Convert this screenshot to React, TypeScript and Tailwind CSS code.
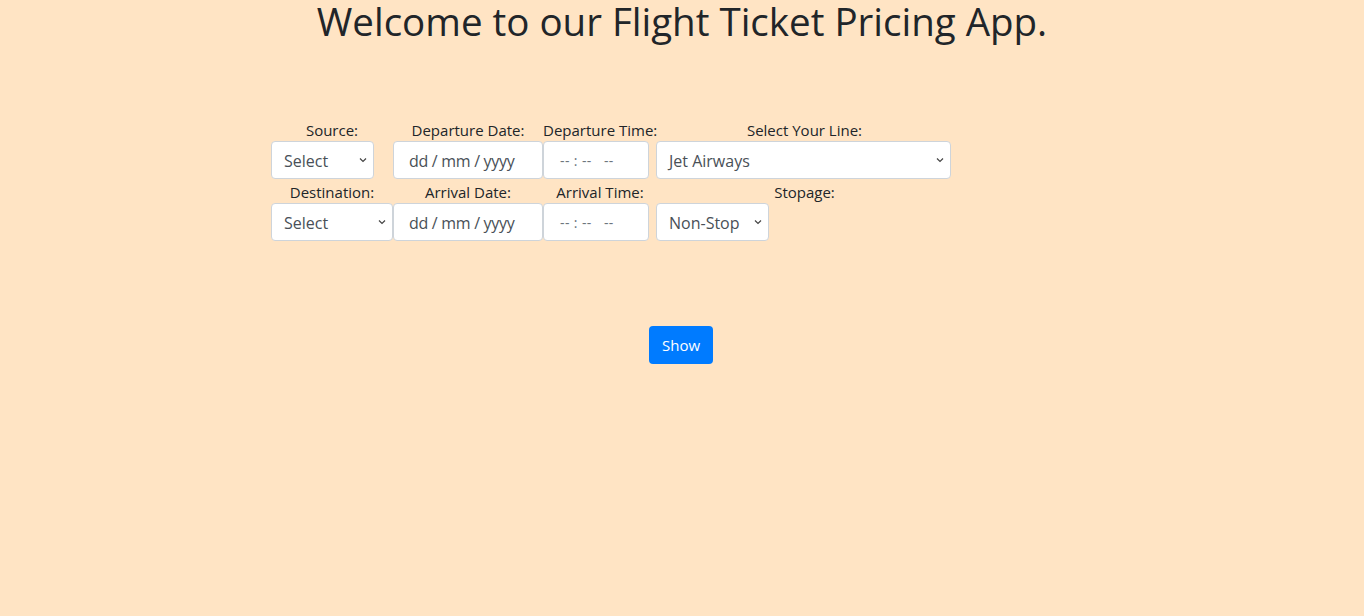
import React from 'react';

const font = { fontFamily: '"Open Sans", "Noto Sans", sans-serif' };

const Chevron = () => (
  <svg width="10" height="10" viewBox="0 0 10 10" className="shrink-0">
    <path d="M2 3.5 L5 6.5 L8 3.5" fill="none" stroke="#444" strokeWidth="1.2" />
  </svg>
);

const SelectBox = ({ text, w }: { text: string; w: string }) => (
  <div className={`${w} h-[38px] bg-white border border-[#ced4da] rounded-[4px] flex items-center justify-between pl-[12px] pr-[5px] text-[16px] text-[#495057]`}>
    <span className="mt-[1px]">{text}</span>
    <Chevron />
  </div>
);

const DateBox = () => (
  <div className="w-[150px] h-[38px] bg-white border border-[#ced4da] rounded-[4px] flex items-center pl-[15px] pt-[1px] text-[16px] text-[#495057] tracking-[-0.3px]">
    dd / mm / yyyy
  </div>
);

const TimeBox = () => (
  <div className="w-[106px] h-[38px] bg-white border border-[#ced4da] rounded-[4px] flex items-center pl-[16px] pt-[1px] text-[14px] text-[#6c757d] whitespace-pre tracking-[0.4px]">
    {'-- : --   --'}
  </div>
);

const Label = ({ children }: { children: React.ReactNode }) => (
  <div className="h-[22px] leading-[22px] text-[15px] text-[#212529] text-center whitespace-nowrap">{children}</div>
);

export default function App() {
  return (
    <div className="min-h-[616px] w-full bg-[#ffe4c4]" style={font}>
      <h1 className="text-center text-[38.5px] leading-[42px] text-[#212529] font-normal m-0">
        Welcome to our Flight Ticket Pricing App.
      </h1>
      <div className="ml-[271px] mt-[77px] grid grid-cols-[122px_150px_114px_295px]">
        <Label>Source:</Label>
        <Label>Departure Date:</Label>
        <Label>Departure Time:</Label>
        <Label>Select Your Line:</Label>
        <div><SelectBox text="Select" w="w-[103px]" /></div>
        <div><DateBox /></div>
        <div><TimeBox /></div>
        <div className="-ml-[1px]"><SelectBox text="Jet Airways" w="w-[295px]" /></div>
        <div className="mt-[2px]"><Label>Destination:</Label></div>
        <div className="mt-[2px]"><Label>Arrival Date:</Label></div>
        <div className="mt-[2px]"><Label>Arrival Time:</Label></div>
        <div className="mt-[2px]"><Label>Stopage:</Label></div>
        <div><SelectBox text="Select" w="w-[122px]" /></div>
        <div><DateBox /></div>
        <div><TimeBox /></div>
        <div className="-ml-[1px]"><SelectBox text="Non-Stop" w="w-[113px]" /></div>
      </div>
      <div className="flex justify-center mt-[85px]">
        <button className="w-[64px] h-[38px] bg-[#007bff] text-white text-[15px] rounded-[4px] -ml-[2px]">
          Show
        </button>
      </div>
    </div>
  );
}
